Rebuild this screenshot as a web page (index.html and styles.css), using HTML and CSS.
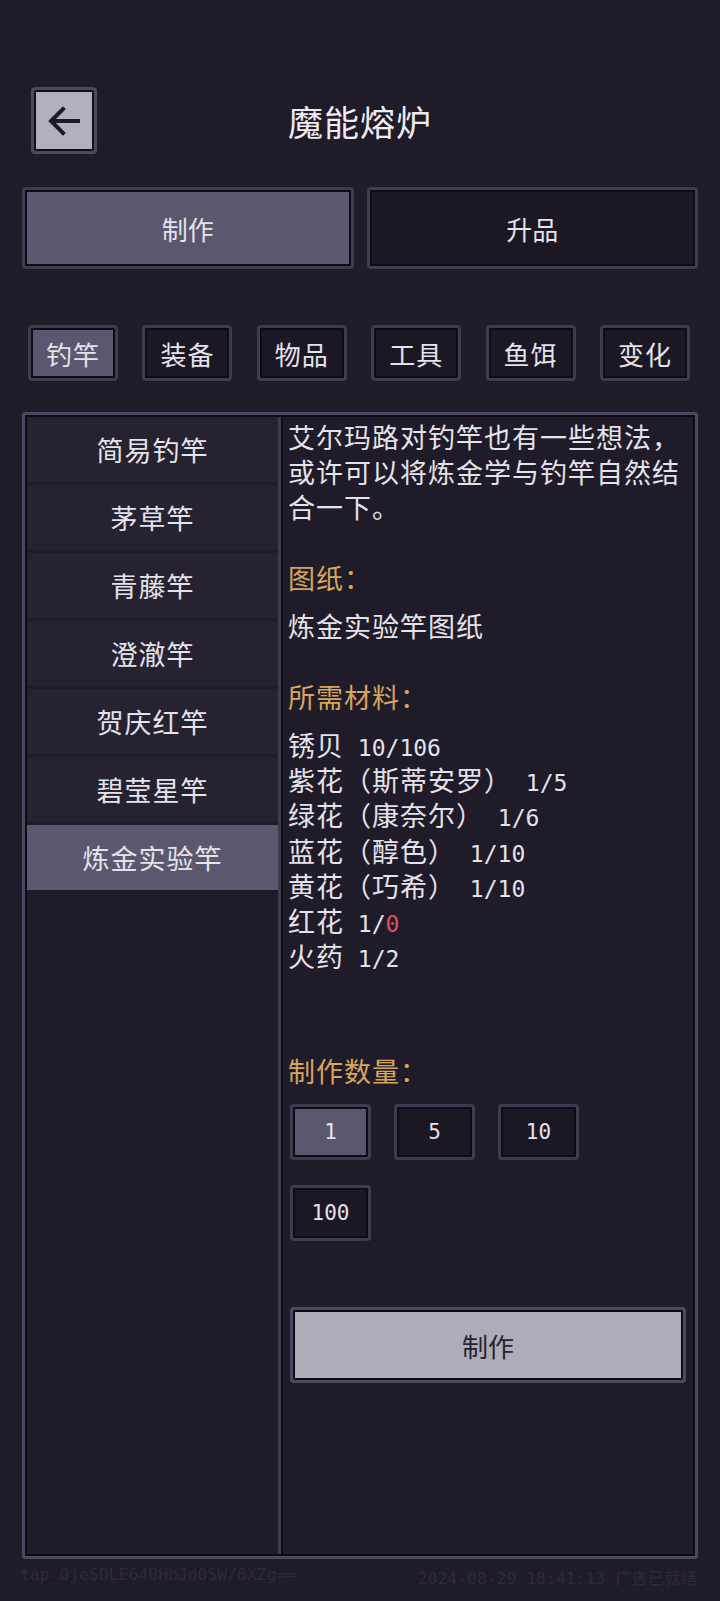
FILE: index.html
```html
<!DOCTYPE html>
<html lang="zh-CN">
<head>
  <meta charset="UTF-8" />
  <title>魔能熔炉</title>
  <meta name="viewport" content="width=device-width,initial-scale=1" />
  <link rel="stylesheet" href="styles.css">
</head>
<body>
  <div class="header">
    <button class="back">
      <svg width="40" height="40" viewBox="0 0 40 40">
        <path d="M34 20 H8 M19 8 L7 20 L19 32" fill="none" stroke="#1e1a27" stroke-width="4" stroke-linecap="square"/>
      </svg>
    </button>
    <h1>魔能熔炉</h1>
    <span></span>
  </div>

  <div class="tabs">
    <button class="tab active">制作</button>
    <button class="tab">升品</button>
  </div>

  <div class="cats">
    <button class="cat active">钓竿</button>
    <button class="cat">装备</button>
    <button class="cat">物品</button>
    <button class="cat">工具</button>
    <button class="cat">鱼饵</button>
    <button class="cat">变化</button>
  </div>

  <div class="panel">
    <ul class="list">
      <li>简易钓竿</li>
      <li>茅草竿</li>
      <li>青藤竿</li>
      <li>澄澈竿</li>
      <li>贺庆红竿</li>
      <li>碧莹星竿</li>
      <li class="active">炼金实验竿</li>
    </ul>

    <div class="detail">
      <p class="desc">艾尔玛路对钓竿也有一些想法，或许可以将炼金学与钓竿自然结合一下。</p>

      <div class="label">图纸：</div>
      <div class="value">炼金实验竿图纸</div>

      <div class="label">所需材料：</div>
      <ul class="mats">
        <li>锈贝<span class="num"> 10/106</span></li>
        <li>紫花（斯蒂安罗）<span class="num"> 1/5</span></li>
        <li>绿花（康奈尔）<span class="num"> 1/6</span></li>
        <li>蓝花（醇色）<span class="num"> 1/10</span></li>
        <li>黄花（巧希）<span class="num"> 1/10</span></li>
        <li>红花<span class="num"> 1/<span class="lack">0</span></span></li>
        <li>火药<span class="num"> 1/2</span></li>
      </ul>

      <div class="label qty-label">制作数量：</div>
      <div class="qty">
        <button class="q active">1</button>
        <button class="q">5</button>
        <button class="q">10</button>
        <button class="q">100</button>
      </div>

      <button class="make">制作</button>
    </div>
  </div>

  <div class="footer">
    <span>tap_0jeSDLE640HbJd0SW/6XZg==</span>
    <span>2024-08-29 18:41:13 广告已就绪</span>
  </div>
</body>
</html>
```

FILE: styles.css
```css
body {
  margin: 0;
  background: #201b28;
  color: #e4e2ea;
  font-family: "Noto Sans CJK SC", sans-serif;
}
button {
  font-family: inherit;
  color: inherit;
  cursor: pointer;
  padding: 0;
  box-sizing: border-box;
}
.header {
  display: grid;
  grid-template-columns: 1fr auto 1fr;
  align-items: center;
  padding: 87px 31px 0;
  height: 67px;
}
.back {
  width: 66px;
  height: 67px;
  background: #b2afbe;
  border: 3px solid #4b4860;
  border-radius: 4px;
  box-shadow: inset 0 0 0 2px #100e19;
  display: flex;
  align-items: center;
  justify-content: center;
}
h1 {
  margin: 0;
  font-size: 35px;
  letter-spacing: 1px;
  font-weight: normal;
  color: #eeecf2;
}
.tabs {
  display: flex;
  gap: 13px;
  padding: 0 22px;
  margin-top: 33px;
}
.tab, .cat, .q {
  background: #1b1723;
  border: 3px solid #3e3b4e;
  border-radius: 4px;
  box-shadow: inset 0 0 0 2px #0d0b15;
}
.tab {
  flex: 1;
  height: 82px;
  font-size: 26px;
}
.tab.active, .cat.active, .q.active {
  background: #5a576f;
}
.cats {
  display: flex;
  justify-content: space-between;
  padding: 0 30px 0 28px;
  margin-top: 56px;
}
.cat {
  width: 90px;
  height: 56px;
  font-size: 26px;
  letter-spacing: 1px;
}
.panel {
  display: flex;
  margin: 31px 22px 0;
  height: 1147px;
  box-sizing: border-box;
  border: 3px solid #4a4760;
  border-radius: 3px;
  box-shadow: inset 0 0 0 2px #0d0b15;
  padding: 2px;
}
.list {
  list-style: none;
  margin: 0;
  padding: 0;
  width: 251px;
  border-right: 3px solid #3e3b4e;
  box-shadow: 2px 0 0 #0d0b15;
}
.list li {
  height: 65px;
  margin-bottom: 3px;
  background: #262230;
  display: flex;
  align-items: center;
  justify-content: center;
  font-size: 27px;
  letter-spacing: 1px;
}
.list li.active {
  background: #5a576f;
}
.detail {
  flex: 1;
  padding: 2px 4px 0 7px;
  font-size: 27px;
  letter-spacing: 1px;
}
.desc {
  margin: 0;
  line-height: 35px;
}
.label {
  margin-top: 36px;
  line-height: 35px;
  color: #d6a65c;
}
.value {
  margin-top: 13px;
  line-height: 35px;
}
.mats {
  list-style: none;
  margin: 13px 0 0;
  padding: 0;
  line-height: 35.2px;
}
.mats li {
  height: 35.2px;
}
.num {
  font-family: "DejaVu Sans Mono", monospace;
  font-size: 23px;
  line-height: 1;
  letter-spacing: 0;
}
.lack {
  color: #e0505c;
}
.qty-label {
  margin-top: 80px;
}
.qty {
  display: grid;
  grid-template-columns: repeat(3, 81px);
  column-gap: 23px;
  row-gap: 25px;
  margin: 16px 0 0 2px;
}
.q {
  height: 56px;
  font-family: "DejaVu Sans Mono", monospace;
  font-size: 21px;
  letter-spacing: 0;
}
.make {
  display: block;
  width: 396px;
  height: 76px;
  margin: 66px 0 0 2px;
  background: #aeacb9;
  border: 3px solid #4b4860;
  border-radius: 4px;
  box-shadow: inset 0 0 0 2px #0d0b15;
  color: #27232f;
  font-size: 26px;
}
.footer {
  display: flex;
  justify-content: space-between;
  padding: 6px 23px 0 20px;
  font-family: "DejaVu Sans Mono", "Noto Sans CJK SC", monospace;
  font-size: 16.4px;
  color: #2e293a;
}
```
